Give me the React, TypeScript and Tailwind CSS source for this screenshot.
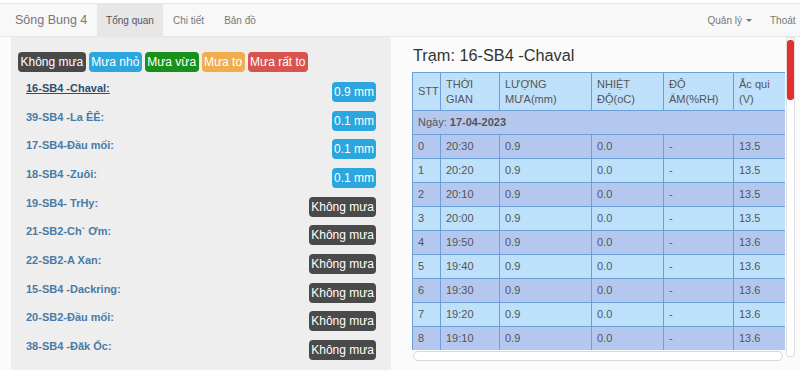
import React from "react";

type Station = { name: string; value: string; rain: boolean };

const stations: Station[] = [
  { name: "16-SB4 -Chaval:", value: "0.9 mm", rain: true },
  { name: "39-SB4 -La ÊÊ:", value: "0.1 mm", rain: true },
  { name: "17-SB4-Đầu mối:", value: "0.1 mm", rain: true },
  { name: "18-SB4 -Zuôi:", value: "0.1 mm", rain: true },
  { name: "19-SB4- TrHy:", value: "Không mưa", rain: false },
  { name: "21-SB2-Ch` Ơm:", value: "Không mưa", rain: false },
  { name: "22-SB2-A Xan:", value: "Không mưa", rain: false },
  { name: "15-SB4 -Dackring:", value: "Không mưa", rain: false },
  { name: "20-SB2-Đầu mối:", value: "Không mưa", rain: false },
  { name: "38-SB4 -Đăk Ốc:", value: "Không mưa", rain: false },
];

const rows = [
  ["0", "20:30", "0.9", "0.0", "-", "13.5"],
  ["1", "20:20", "0.9", "0.0", "-", "13.5"],
  ["2", "20:10", "0.9", "0.0", "-", "13.5"],
  ["3", "20:00", "0.9", "0.0", "-", "13.5"],
  ["4", "19:50", "0.9", "0.0", "-", "13.6"],
  ["5", "19:40", "0.9", "0.0", "-", "13.6"],
  ["6", "19:30", "0.9", "0.0", "-", "13.6"],
  ["7", "19:20", "0.9", "0.0", "-", "13.6"],
  ["8", "19:10", "0.9", "0.0", "-", "13.6"],
];

const legend = [
  { label: "Không mưa", cls: "bg-[#4a4a4a]" },
  { label: "Mưa nhỏ", cls: "bg-[#2ca6de]" },
  { label: "Mưa vừa", cls: "bg-[#17901c]" },
  { label: "Mưa to", cls: "bg-[#f0ad4e]" },
  { label: "Mưa rất to", cls: "bg-[#d9534f]" },
];

const cell = "border border-[#6a9fd8] px-[5px] align-middle";

export default function App() {
  return (
    <div className="w-[800px] h-[370px] overflow-hidden bg-[#fbfbfb] font-['Liberation_Sans',Arial,sans-serif] text-[#555]">
      {/* navbar */}
      <div className="pt-[3px] bg-white">
        <div className="h-[34px] flex items-stretch bg-[#f8f8f8] border-t border-b border-[#e7e7e7] text-[10px] text-[#777]">
          <div className="w-[97px] pl-[15px] flex items-center text-[12.5px] text-[#777]">Sông Bung 4</div>
          <div className="w-[66px] justify-center flex items-center bg-[#e7e7e7] text-[#555]">Tổng quan</div>
          <div className="px-[10px] flex items-center">Chi tiết</div>
          <div className="px-[10px] flex items-center">Bản đồ</div>
          <div className="ml-auto flex items-center gap-[4px] pr-[18px]">
            Quản lý
            <span className="inline-block w-0 h-0 border-l-[3px] border-r-[3px] border-t-[3px] border-l-transparent border-r-transparent border-t-[#777]" />
          </div>
          <div className="flex items-center w-[30px] whitespace-nowrap">Thoát</div>
        </div>
      </div>

      <div className="flex h-[333px]">
        {/* left panel */}
        <div className="ml-[11px] w-[380px] bg-[#eeeeee] pl-[7px] pr-[15px] pt-[15px]">
          <div className="flex gap-[3px] text-[12px] text-white leading-[20px]">
            {legend.map((l) => (
              <span key={l.label} className={`${l.cls} rounded-[4px] px-[2.5px]`}>
                {l.label}
              </span>
            ))}
          </div>
          <div className="pl-[8px] pt-[5px]">
            {stations.map((s, i) => (
              <div key={s.name} className="h-[28.67px] flex items-start justify-between">
                <span
                  className={`text-[11px] font-bold pt-[3px] ${
                    i === 0 ? "text-[#2d4f6e] underline" : "text-[#4a7ba6]"
                  }`}
                >
                  {s.name}
                </span>
                <span
                  className={`mt-[5px] rounded-[4px] px-[2px] text-[12px] leading-[20px] text-white ${
                    s.rain ? "bg-[#2ca6de]" : "bg-[#4a4a4a]"
                  }`}
                >
                  {s.value}
                </span>
              </div>
            ))}
          </div>
        </div>

        {/* right panel */}
        <div className="ml-[21px] w-[383px] flex">
          <div className="w-[373px] flex flex-col">
            <div className="pt-[8px] pl-[1px] h-[35px] text-[16.3px] text-[#333] leading-[20px]">Trạm: 16-SB4 -Chaval</div>
            <div className="h-[278px] overflow-hidden">
              <table className="table-fixed border-collapse text-[11px] text-[#555] w-[373px]">
                <colgroup>
                  <col className="w-[28px]" />
                  <col className="w-[59px]" />
                  <col className="w-[92px]" />
                  <col className="w-[72px]" />
                  <col className="w-[70px]" />
                  <col className="w-[52px]" />
                </colgroup>
                <thead>
                  <tr className="bg-[#bfe0fa] h-[38px] leading-[15px] text-left font-normal">
                    <th className={`${cell} font-normal`}>STT</th>
                    <th className={`${cell} font-normal`}>THỜI<br />GIAN</th>
                    <th className={`${cell} font-normal`}>LƯỢNG<br />MƯA(mm)</th>
                    <th className={`${cell} font-normal`}>NHIỆT<br />ĐỘ(oC)</th>
                    <th className={`${cell} font-normal`}>ĐỘ<br />ẨM(%RH)</th>
                    <th className={`${cell} font-normal`}>Ắc qui<br />(V)</th>
                  </tr>
                </thead>
                <tbody>
                  <tr className="bg-[#b4c8ef] h-[24px]">
                    <td colSpan={6} className={cell}>
                      Ngày: <b>17-04-2023</b>
                    </td>
                  </tr>
                  {rows.map((r) => (
                    <tr
                      key={r[0]}
                      className={`h-[24px] ${Number(r[0]) % 2 === 0 ? "bg-[#b4c8ef]" : "bg-[#bde0fb]"}`}
                    >
                      {r.map((c, j) => (
                        <td key={j} className={cell}>
                          {c}
                        </td>
                      ))}
                    </tr>
                  ))}
                </tbody>
              </table>
            </div>
            <div className="mt-[1px] ml-[1px] w-[370px] h-[10px] rounded-full bg-white border border-[#d8d8d8]" />
          </div>
          {/* vertical scrollbar */}
          <div className="ml-[1px] w-[9px] h-[320px] bg-white border border-[#dedede] rounded-b-[3px]">
            <div className="mt-[2px] mx-auto w-[7px] h-[60px] rounded-[3px] bg-[#e23030]" />
          </div>
        </div>
      </div>
    </div>
  );
}
